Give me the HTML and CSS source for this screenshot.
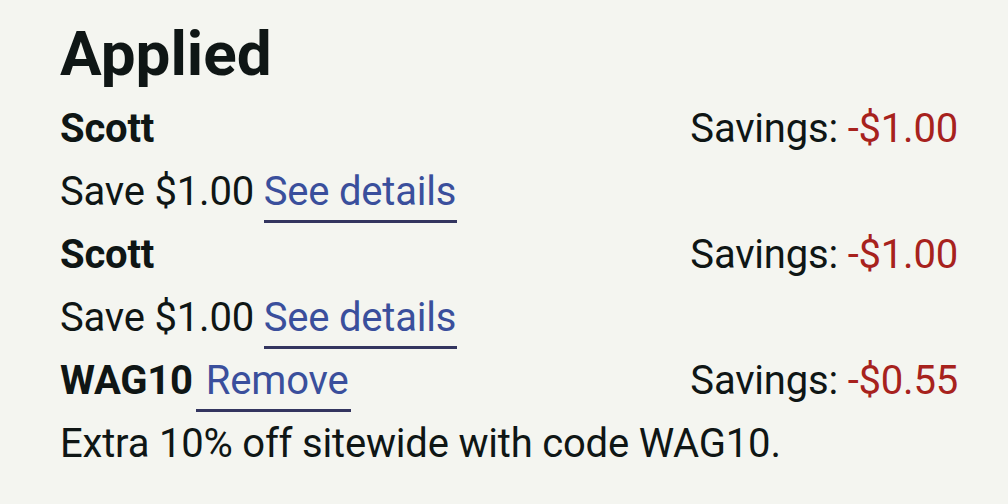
FILE: index.html
```html
<!DOCTYPE html>
<html lang="en">
<head>
<meta charset="utf-8">
<title>Applied</title>
<link rel="stylesheet" href="styles.css">
</head>
<body>
<section class="applied">
  <h1 class="applied-title">Applied</h1>
  <div class="promo">
    <div class="promo-row">
      <span class="promo-name">Scott</span>
      <span class="savings">Savings: <span class="amount">-$1.00</span></span>
    </div>
    <div class="promo-desc">Save $1.00 <a class="link" href="#">See details</a></div>
  </div>
  <div class="promo">
    <div class="promo-row">
      <span class="promo-name">Scott</span>
      <span class="savings">Savings: <span class="amount">-$1.00</span></span>
    </div>
    <div class="promo-desc">Save $1.00 <a class="link" href="#">See details</a></div>
  </div>
  <div class="promo">
    <div class="promo-row">
      <span class="promo-name">WAG10<button class="remove" type="button">Remove</button></span>
      <span class="savings">Savings: <span class="amount">-$0.55</span></span>
    </div>
    <div class="promo-desc">Extra 10% off sitewide with code WAG10.</div>
  </div>
</section>
</body>
</html>
```
FILE: styles.css
```css
html, body {
  margin: 0;
  padding: 0;
  background: #f4f5f0;
}
body {
  font-family: Roboto, "Liberation Sans", sans-serif;
  color: #0f1615;
}
.applied {
  padding: 23px 50px 0 60px;
}
.applied-title {
  margin: 0 0 12px;
  font-size: 62px;
  line-height: 62px;
  font-weight: 700;
}
.promo-row,
.promo-desc {
  font-size: 40px;
  line-height: 63px;
  letter-spacing: -0.2px;
}
.promo-row {
  display: flex;
  justify-content: space-between;
  align-items: baseline;
}
.promo-name {
  font-weight: 700;
  display: flex;
  align-items: baseline;
}
.amount {
  color: #a7221d;
}
.link {
  color: #3a4f9c;
  text-decoration: none;
  display: inline-block;
  line-height: 46px;
  padding: 0 1px 5px 0;
  margin-left: 0;
  border-bottom: 3px solid #33355f;
}
.remove {
  font: inherit;
  font-weight: 400;
  letter-spacing: inherit;
  color: #3a4f9c;
  background: none;
  border: 0;
  border-bottom: 3px solid #33355f;
  margin: 0 0 0 3px;
  padding: 0 3px 5px 10px;
  line-height: 46px;
  cursor: pointer;
}
```
